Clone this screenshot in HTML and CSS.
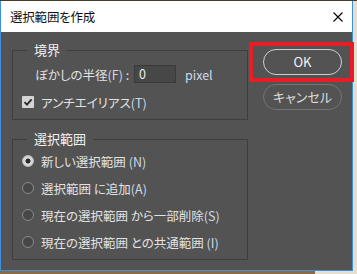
FILE: index.html
```html
<!DOCTYPE html>
<html lang="ja">
<head>
<meta charset="utf-8">
<title>選択範囲を作成</title>
<link rel="stylesheet" href="styles.css">
</head>
<body>
<div class="window">
  <div class="titlebar">
    <span class="title">選択範囲を作成</span>
    <svg class="close" width="10" height="10" viewBox="0 0 10 10"><path d="M0.5 0.5L9.5 9.5M9.5 0.5L0.5 9.5" stroke="#000" stroke-width="1.1" fill="none"/></svg>
  </div>
  <div class="body">
    <div class="left">
      <fieldset class="group group-edge">
        <legend class="legend">境界</legend>
        <div class="row feather">
          <span class="label">ぼかしの半径<span class="lat">(F)</span> :</span>
          <span class="input">0</span>
          <span class="unit lat">pixel</span>
        </div>
        <div class="row check-row">
          <span class="checkbox"><svg width="12" height="12" viewBox="0 0 12 12"><path d="M2.5 6.2L5 8.6L9.6 3.4" stroke="#2a2a2a" stroke-width="1.8" fill="none"/></svg></span>
          <span class="opt">アンチエイリアス<span class="lat">(T)</span></span>
        </div>
      </fieldset>
      <fieldset class="group group-sel">
        <legend class="legend">選択範囲</legend>
        <div class="row radio-row"><span class="radio on"></span><span class="opt">新しい選択範囲 <span class="lat">(N)</span></span></div>
        <div class="row radio-row"><span class="radio"></span><span class="opt">選択範囲 に追加<span class="lat">(A)</span></span></div>
        <div class="row radio-row"><span class="radio"></span><span class="opt">現在の選択範囲 から一部削除<span class="lat">(S)</span></span></div>
        <div class="row radio-row"><span class="radio"></span><span class="opt">現在の選択範囲 との共通範囲 <span class="lat">(I)</span></span></div>
      </fieldset>
    </div>
    <div class="right">
      <button class="btn btn-ok">OK</button>
      <button class="btn btn-cancel">キャンセル</button>
    </div>
    <div class="highlight"></div>
  </div>
</div>
<div class="ground"></div>
</body>
</html>
```
FILE: styles.css
```css
html, body {
  margin: 0;
  padding: 0;
}
body {
  background: #e4dfcf;
  width: 357px;
  height: 274px;
  overflow: hidden;
  font-family: "Noto Sans CJK JP", "Noto Sans", sans-serif;
  font-feature-settings: "palt";
  border-top: 1px solid #4a3a2c;
  box-sizing: border-box;
}
.window {
  width: 353px;
  height: 270px;
  box-sizing: border-box;
  border: 1px solid #3d8fe0;
  border-top: none;
  display: flex;
  flex-direction: column;
}
.titlebar {
  height: 31px;
  background: #ffffff;
  display: flex;
  align-items: center;
  justify-content: space-between;
  padding: 0 9px 0 9px;
}
.title {
  font-size: 12.5px;
  color: #111;
  letter-spacing: -0.2px;
}
.close {
  display: block;
  margin-right: 0;
}
.body {
  flex: 1;
  background: #535353;
  display: flex;
  padding: 9px 9px 0 11px;
  position: relative;
}
.left {
  width: 236px;
  display: flex;
  flex-direction: column;
  gap: 10px;
}
.group {
  margin: 0;
  border: 1px solid #3e3e3e;
  min-inline-size: 0;
  padding: 0 8px 8px 9px;
}
.legend {
  font-size: 13px;
  line-height: 18px;
  color: #f2f2f2;
  padding: 0 7px;
  margin-left: 5px;
}
.row {
  display: flex;
  align-items: center;
  height: 18px;
  font-size: 12.5px;
  color: #e2e2e2;
}
.lat {
  color: #cdd9e8;
}
.feather {
  margin-top: 6px;
}
.label {
  margin-left: 13px;
  width: 99px;
  white-space: nowrap;
}
.input {
  width: 42px;
  height: 18px;
  box-sizing: border-box;
  background: #474747;
  border: 1px solid #3a3a3a;
  color: #f0f0f0;
  padding-left: 4px;
  line-height: 16px;
  font-size: 12.5px;
}
.unit {
  margin-left: 9px;
}
.check-row {
  margin-top: 10px;
}
.checkbox {
  width: 12px;
  height: 12px;
  background: #d4d4d4;
  border-radius: 1px;
  display: block;
  margin-right: 7px;
}
.checkbox svg {
  display: block;
}
.opt {
  white-space: nowrap;
}
.group-sel {
  padding-bottom: 8px;
}
.radio-row {
  margin-top: 9px;
}
.group-sel .legend + .radio-row {
  margin-top: 4px;
}
.radio {
  width: 12px;
  height: 12px;
  border-radius: 50%;
  box-sizing: border-box;
  border: 1px solid #8a8a8a;
  background: #474747;
  margin-right: 7px;
  display: block;
}
.radio.on {
  background: radial-gradient(circle, #2b2b2b 0 2.2px, #d6d6d6 2.8px);
  border-color: #bdbdbd;
}
.right {
  margin-left: 15px;
  padding-top: 8px;
  display: flex;
  flex-direction: column;
  gap: 9px;
}
.btn {
  width: 79px;
  height: 26px;
  border-radius: 13px;
  background: #535353;
  font-family: "Noto Sans CJK JP", "Noto Sans", sans-serif;
  font-feature-settings: "palt";
  font-size: 13px;
  padding: 0;
  line-height: 22px;
}
.btn-ok {
  border: 1.5px solid #cfcfcf;
  color: #f4f4f4;
  font-weight: 400;
}
.btn-cancel {
  border: 1px solid #747474;
  color: #dcdcdc;
}
.highlight {
  position: absolute;
  left: 248px;
  top: 10px;
  width: 105px;
  height: 40px;
  box-sizing: border-box;
  border: 4px solid #e81d25;
}
.ground {
  width: 315px;
  height: 4px;
  background: #8b6a46;
}
```
